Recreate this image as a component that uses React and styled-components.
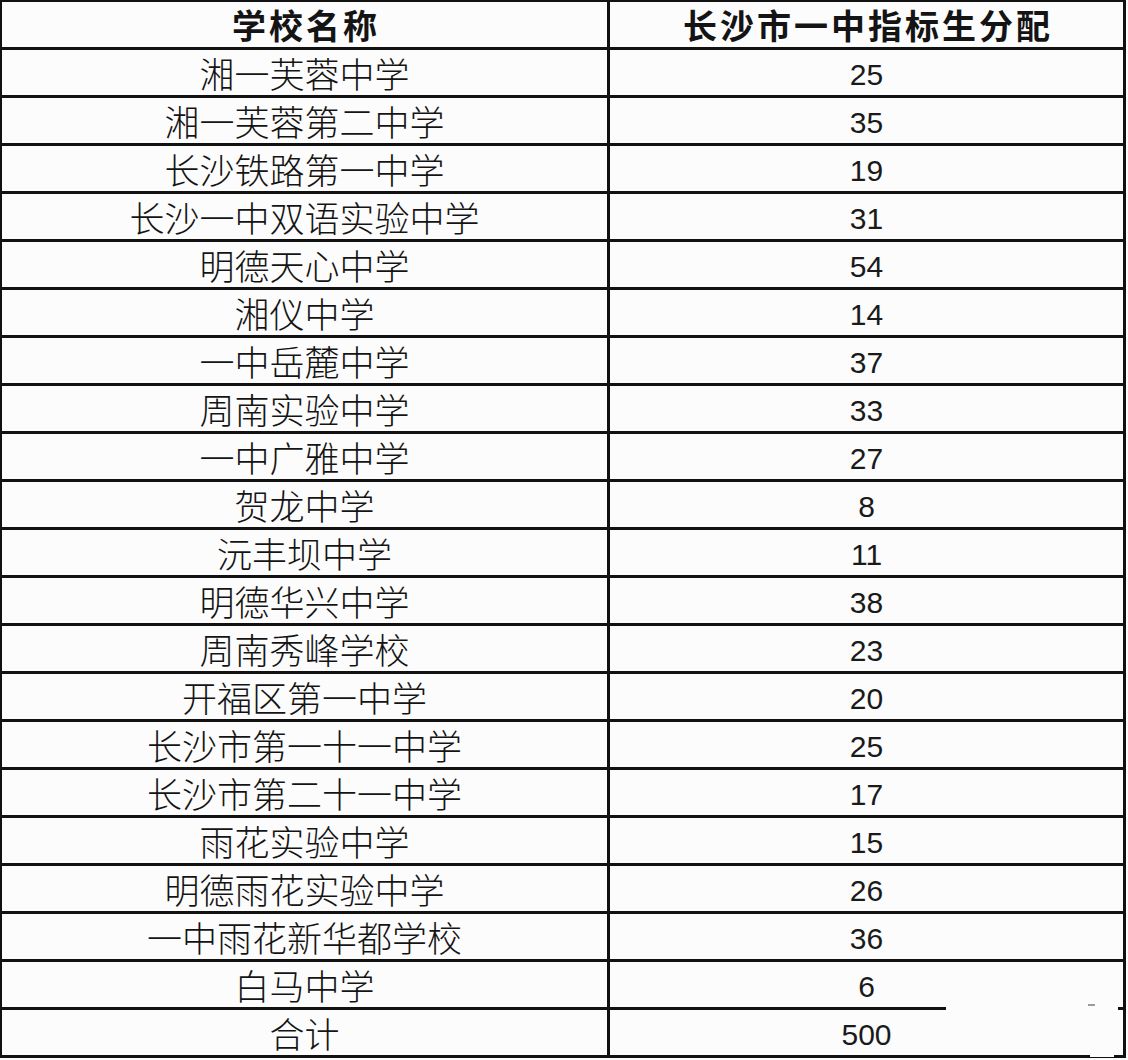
import React from 'react'
import styled, { createGlobalStyle } from 'styled-components'

const GlobalStyle = createGlobalStyle`
  html, body {
    margin: 0;
    padding: 0;
    background: #fcfcfc;
  }
`

const rows = [
  ['湘一芙蓉中学', '25'],
  ['湘一芙蓉第二中学', '35'],
  ['长沙铁路第一中学', '19'],
  ['长沙一中双语实验中学', '31'],
  ['明德天心中学', '54'],
  ['湘仪中学', '14'],
  ['一中岳麓中学', '37'],
  ['周南实验中学', '33'],
  ['一中广雅中学', '27'],
  ['贺龙中学', '8'],
  ['沅丰坝中学', '11'],
  ['明德华兴中学', '38'],
  ['周南秀峰学校', '23'],
  ['开福区第一中学', '20'],
  ['长沙市第一十一中学', '25'],
  ['长沙市第二十一中学', '17'],
  ['雨花实验中学', '15'],
  ['明德雨花实验中学', '26'],
  ['一中雨花新华都学校', '36'],
  ['白马中学', '6'],
  ['合计', '500'],
]

const Wrap = styled.div`
  position: relative;
  width: 1126px;
`

const Table = styled.div`
  display: grid;
  grid-template-columns: 608px 516px;
  border-top: 2px solid #111;
  border-left: 2px solid #111;
`

const Cell = styled.div`
  height: 45px;
  border-right: 3px solid #111;
  border-bottom: 3px solid #111;
  display: flex;
  align-items: center;
  justify-content: center;
  color: #141414;
  white-space: nowrap;
`

const HeadCell = styled(Cell)`
  font-family: "Noto Sans CJK SC", sans-serif;
  font-weight: 700;
  font-size: 34px;
  letter-spacing: 3px;
  padding-left: 3px;
`

const NameCell = styled(Cell)`
  font-family: "Noto Sans CJK SC", sans-serif;
  font-weight: 300;
  font-size: 35px;
`

const NumCell = styled(Cell)`
  font-family: "Liberation Sans", Arial, sans-serif;
  font-size: 30px;
  padding-top: 4px;
  height: 41px;
  color: #1a1a1a;
`

/* erased watermark near the bottom right corner */
const Patch = styled.div`
  position: absolute;
  left: 946px;
  top: 996px;
  width: 172px;
  height: 58px;
  background: #fcfcfc;

  &::before {
    content: '';
    position: absolute;
    left: 142px;
    top: 8px;
    width: 7px;
    height: 2px;
    background: #9a9a9a;
  }

  &::after {
    content: '';
    position: absolute;
    left: 144px;
    top: 58px;
    width: 24px;
    height: 3px;
    background: #fcfcfc;
  }
`

export default function App() {
  return (
    <>
      <GlobalStyle />
      <Wrap>
        <Table>
          <HeadCell>学校名称</HeadCell>
          <HeadCell>长沙市一中指标生分配</HeadCell>
          {rows.map(([name, num], i) => (
            <React.Fragment key={i}>
              <NameCell>{name}</NameCell>
              <NumCell>{num}</NumCell>
            </React.Fragment>
          ))}
        </Table>
        <Patch />
      </Wrap>
    </>
  )
}
